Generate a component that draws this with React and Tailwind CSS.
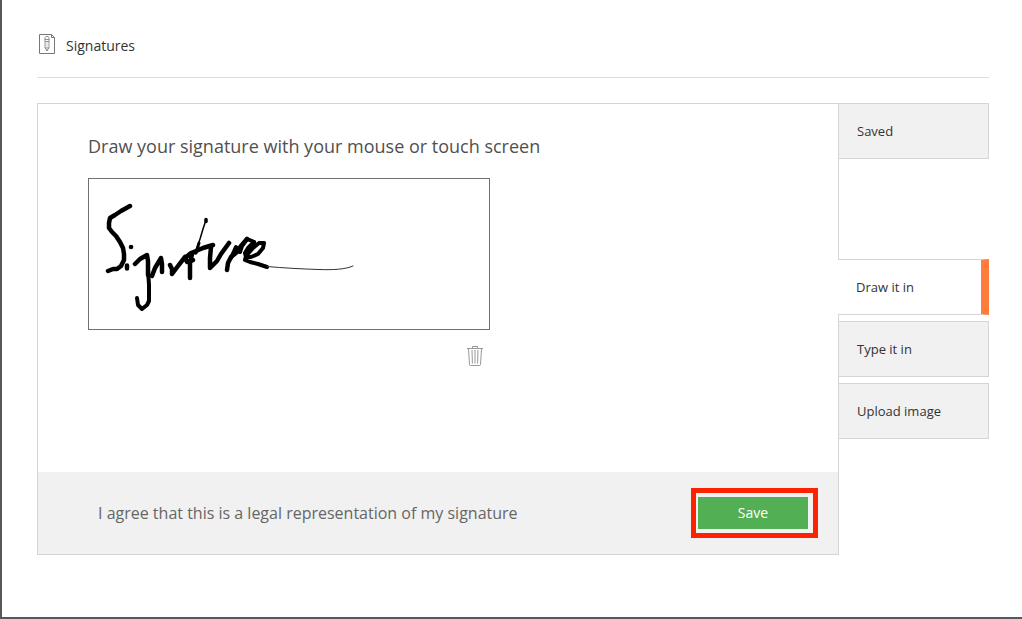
import React from "react";

function DocumentIcon() {
  return (
    <svg className="h-5 w-4 shrink-0" viewBox="0 0 16 20" fill="none" stroke="#77777a" aria-hidden="true">
      <path d="M.5.5h12l3 3v16H.5z" />
      <path d="M12.5.5v3h3" />
      <path d="M6 5V3.500c0-1.500 4-1.500 4 0V5M5.500 5.500h5M6 5.500v8.500l2 2.500 2-2.500V5.500M6 7.500h4M6 14h4" strokeWidth=".8" />
      <path d="M8 8v6" stroke="#b5b5b5" strokeWidth=".6" />
      <path d="M7.400 16h1.200L8 17z" fill="#58585a" strokeWidth=".5" />
    </svg>
  );
}

function TrashIcon() {
  return (
    <svg className="h-5 w-4" viewBox="0 0 16 20" fill="none" stroke="#999" aria-hidden="true">
      <path d="M0 2.5h16M5.5 2V.5h5V2" />
      <path d="M1.5 3l1 15.5c0 .6.4 1 1 1h9c.6 0 1-.4 1-1L14.500 3" />
      <path d="M5 4l.4 13.500M8 4v13.500M11 4l-.4 13.500" />
    </svg>
  );
}

function Signature() {
  return (
    <svg
      role="img"
      aria-label="Handwritten signature"
      className="block h-[150px] w-full"
      viewBox="89 179 400 150"
      preserveAspectRatio="xMinYMin meet"
      fill="none"
      stroke="#000"
      strokeLinecap="round"
      strokeLinejoin="round"
    >
      <g strokeWidth="4.5">
        <path d="M130 206L121 211L115 215L110 218L109 223L109 228L112 232L116 236L120 242L123 248L124 254L124 260L121 266L117 269L113 269L108 271" />
        <path d="M131 247h.1M127 265.500v3" />
        <path d="M135 264L140 259L147 255L148 261L148 275" />
        <path d="M152 276L155 268L161 258L162 264L162 272" />
        <path d="M170 265L172 269L172 274L178 266L185 257L187 262L193 260" />
        <path d="M190 278L190 270L190 263L192 254" />
        <path d="M185 258L191 253L196 251L203 248L213 245" />
        <path d="M211 247L210 258L210 268L217 261L221 254L229 243" />
        <path d="M227 270L228 263L231 257L237 252L241 246L247 239" />
        <path d="M231 258L236 247" strokeWidth="4" />
      </g>
      <path d="M148 270L149 285L149 301L147 305L142 309L138 305L137 298" strokeWidth="4" />
      <path d="M195 254L200 239L203 229L206 220" strokeWidth="1.500" />
      <path d="M206 219.500v2" strokeWidth="3.500" />
      <path d="M196 253L199 243" strokeWidth="3" />
      <path d="M247 239L242 246L240 252M247 239L252 241L254 242" strokeWidth="4" />
      <path d="M254 242L248 248L245 253L246 257L251 257L258 254L263 248L264 243L259 243L253 248L246 256L245 260L250 262L258 264L267 267" strokeWidth="4" />
      <path d="M267 266.500C284 268 302 269 319 269.500C333 270 345 269.500 353 266" stroke="#333" strokeWidth="1" />
    </svg>
  );
}

function Tab({ children, selected, className = "" }) {
  return (
    <button
      type="button"
      role="tab"
      aria-selected={Boolean(selected)}
      className={
        "h-14 w-full text-left text-[13px] leading-5 text-[#333] " +
        (selected
          ? "border-y border-r-8 border-y-[#d5d5d5] border-r-[#ff7c3a] bg-white pl-[18px] "
          : "border border-[#d5d5d5] bg-[#f1f1f1] pl-[18px] ") +
        className
      }
    >
      {children}
    </button>
  );
}

export default function App() {
  return (
    <div className="min-h-screen border-b-2 border-l-2 border-[#58585a] bg-white pt-[34px] pr-[33px] pb-[60px] pl-[35px] font-['Open_Sans','Noto_Sans',sans-serif]">
      <header className="flex h-11 items-start gap-[11px] border-b border-[#dedede] pl-0.5">
        <DocumentIcon />
        <h1 className="pt-0.5 text-sm leading-5 text-[#333]">Signatures</h1>
      </header>

      <div className="mt-[25px] flex items-start">
        <main className="flex min-w-0 flex-1 flex-col border border-[#d5d5d5]">
          <section className="px-[50px] pt-[30px] pb-[106px]">
            <h2 className="text-lg leading-6 text-[#505050]">Draw your signature with your mouse or touch screen</h2>
            <div className="mt-5 w-full max-w-[402px]">
              <div className="border border-[#707070]">
                <Signature />
              </div>
              <div className="mt-4 flex justify-end pr-[7px]">
                <button type="button" aria-label="Clear signature">
                  <TrashIcon />
                </button>
              </div>
            </div>
          </section>
          <footer className="flex items-center justify-between bg-[#f1f1f1] py-4 pr-5 pl-[60px]">
            <p className="text-base leading-6 text-[#666]">I agree that this is a legal representation of my signature</p>
            <div className="border-[5px] border-[#ff2200] pt-1 pr-[5px] pb-1 pl-0.5">
              <button type="button" className="block h-8 w-[110px] bg-[#53af53] text-sm leading-8 text-white">
                Save
              </button>
            </div>
          </footer>
        </main>

        <div role="tablist" aria-label="Signature source" aria-orientation="vertical" className="-ml-px flex w-[151px] shrink-0 flex-col gap-1.5">
          <Tab className="mb-[94px]">Saved</Tab>
          <Tab selected>Draw it in</Tab>
          <Tab>Type it in</Tab>
          <Tab>Upload image</Tab>
        </div>
      </div>
    </div>
  );
}
